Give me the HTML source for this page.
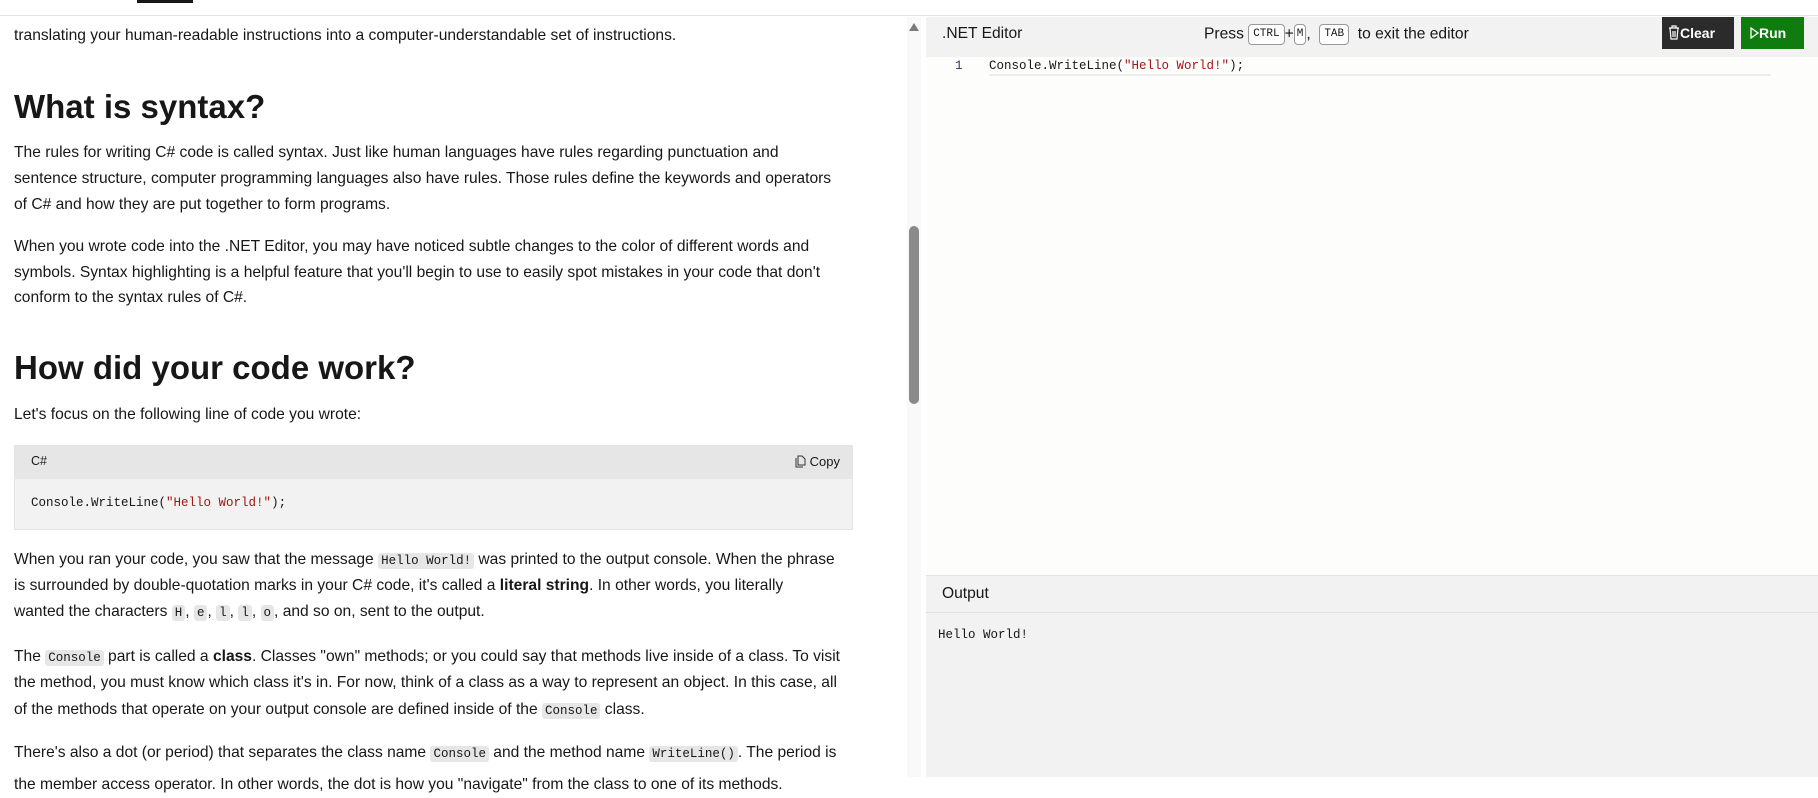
<!DOCTYPE html>
<html><head><meta charset="utf-8"><style>
*{margin:0;padding:0;box-sizing:border-box}
body{width:1818px;height:777px;overflow:hidden;background:#fff;font-family:"Liberation Sans",Arial,sans-serif;color:#171717;position:relative}
.l{position:absolute;left:14px;white-space:nowrap;font-size:15.6px;line-height:26px;height:26px}
.h{position:absolute;left:14px;white-space:nowrap;font-size:33px;font-weight:600;line-height:40px}
code{font-family:"Liberation Mono",monospace;font-size:12.5px;background:#e6e6e6;border-radius:3px;padding:1px 3px}
.mono{font-family:"Liberation Mono",monospace}
.str{color:#a31515}
.kbd{display:inline-block;border:1px solid #999;border-radius:4px;font-family:"Liberation Mono",monospace;font-size:11px;padding:2px 4px;line-height:15px;background:#fff;vertical-align:middle}
</style></head><body>
<div style="position:absolute;left:0;top:0;width:1818px;height:16px;background:#fff;border-bottom:1px solid #e3e3e3;z-index:3"></div>
<div style="position:absolute;left:137px;top:0;width:56px;height:3px;background:#171717;z-index:4"></div>

<div class="l" style="top:-5px">implemented by using the .NET Editor and you wrote code that ran and produced the expected result immediately</div>
<div class="l" style="top:23px">translating your human-readable instructions into a computer-understandable set of instructions.</div>
<div class="h" style="top:87px">What is syntax?</div>
<div class="l" style="top:140px">The rules for writing C# code is called syntax. Just like human languages have rules regarding punctuation and</div>
<div class="l" style="top:166px">sentence structure, computer programming languages also have rules. Those rules define the keywords and operators</div>
<div class="l" style="top:192px">of C# and how they are put together to form programs.</div>
<div class="l" style="top:234px">When you wrote code into the .NET Editor, you may have noticed subtle changes to the color of different words and</div>
<div class="l" style="top:260px">symbols. Syntax highlighting is a helpful feature that you'll begin to use to easily spot mistakes in your code that don't</div>
<div class="l" style="top:285px">conform to the syntax rules of C#.</div>
<div class="h" style="top:348px">How did your code work?</div>
<div class="l" style="top:402px">Let's focus on the following line of code you wrote:</div>

<div style="position:absolute;left:14px;top:445px;width:839px;height:85px;background:#f2f2f2;border:1px solid #e3e3e3">
 <div style="height:33px;background:#e6e6e6;position:relative">
  <span style="position:absolute;left:16px;top:8px;font-size:12.5px">C#</span>
  <span style="position:absolute;right:12px;top:8px;font-size:13px"><svg width="11" height="13" viewBox="0 0 11 13" style="vertical-align:-2px"><path d="M1 3v9h7M3 1h4l3 3v6H3z" fill="none" stroke="#333"/></svg> Copy</span>
 </div>
 <div class="mono" style="position:absolute;left:16px;top:50px;font-size:12.5px">Console.WriteLine(<span class="str">"Hello World!"</span>);</div>
</div>

<div class="l" style="top:547px">When you ran your code, you saw that the message <code>Hello World!</code> was printed to the output console. When the phrase</div>
<div class="l" style="top:573px">is surrounded by double-quotation marks in your C# code, it's called a <b>literal string</b>. In other words, you literally</div>
<div class="l" style="top:599px">wanted the characters <code>H</code>, <code>e</code>, <code>l</code>, <code>l</code>, <code>o</code>, and so on, sent to the output.</div>
<div class="l" style="top:644px">The <code>Console</code> part is called a <b>class</b>. Classes "own" methods; or you could say that methods live inside of a class. To visit</div>
<div class="l" style="top:670px">the method, you must know which class it's in. For now, think of a class as a way to represent an object. In this case, all</div>
<div class="l" style="top:697px">of the methods that operate on your output console are defined inside of the <code>Console</code> class.</div>
<div class="l" style="top:740px">There's also a dot (or period) that separates the class name <code>Console</code> and the method name <code>WriteLine()</code>. The period is</div>
<div class="l" style="top:772px">the member access operator. In other words, the dot is how you "navigate" from the class to one of its methods.</div>

<div style="position:absolute;left:907px;top:17px;width:14px;height:760px;background:#f9f9f9"></div>
<div style="position:absolute;left:909px;top:23px;width:0;height:0;border-left:5px solid transparent;border-right:5px solid transparent;border-bottom:8px solid #7a7a7a"></div>
<div style="position:absolute;left:909px;top:226px;width:10px;height:178px;background:#8a8a8a;border-radius:5px"></div>

<div style="position:absolute;left:926px;top:17px;width:892px;height:40px;background:#f2f2f2"></div>
<div style="position:absolute;left:942px;top:25px;font-size:15.6px">.NET Editor</div>
<div style="position:absolute;left:1204px;top:24px;font-size:15.6px;white-space:nowrap">Press <span class="kbd">CTRL</span>+<span class="kbd" style="padding:2px 2px">M</span>, &nbsp;<span class="kbd">TAB</span> &nbsp;to exit the editor</div>
<div style="position:absolute;left:1662px;top:17px;width:72px;height:32px;background:#2b2b2b;color:#fff;font-size:14px;font-weight:bold;line-height:32px;padding-left:6px"><svg width="12" height="15" viewBox="0 0 12 15" style="vertical-align:-2px"><path d="M1 3h10M4 3V1h4v2M2 3l1 11h6l1-11M5 6v6M7 6v6" fill="none" stroke="#fff" stroke-width="1.2"/></svg>Clear</div>
<div style="position:absolute;left:1741px;top:17px;width:63px;height:32px;background:#107c10;color:#fff;font-size:14px;font-weight:bold;line-height:32px;padding-left:9px"><svg width="9" height="12" viewBox="0 0 9 12" style="vertical-align:-1px"><path d="M1 1v10l7-5z" fill="none" stroke="#fff" stroke-width="1.3"/></svg>Run</div>

<div style="position:absolute;left:926px;top:57px;width:892px;height:518px;background:#fdfdfc"></div>
<div class="mono" style="position:absolute;left:955px;top:59px;font-size:12.5px;color:#1b3a6b">1</div>
<div style="position:absolute;left:989px;top:58px;width:782px;height:18px;border-bottom:2px solid #ececec"></div>
<div class="mono" style="position:absolute;left:989px;top:59px;font-size:12.5px">Console.WriteLine(<span class="str">"Hello World!"</span>);</div>

<div style="position:absolute;left:926px;top:575px;width:892px;height:202px;background:#f2f2f2;border-top:1px solid #e3e3e3"></div>
<div style="position:absolute;left:926px;top:612px;width:892px;height:1px;background:#e0e0e0"></div>
<div style="position:absolute;left:942px;top:585px;font-size:15.6px">Output</div>
<div class="mono" style="position:absolute;left:938px;top:628px;font-size:12.5px">Hello World!</div>
</body></html>
